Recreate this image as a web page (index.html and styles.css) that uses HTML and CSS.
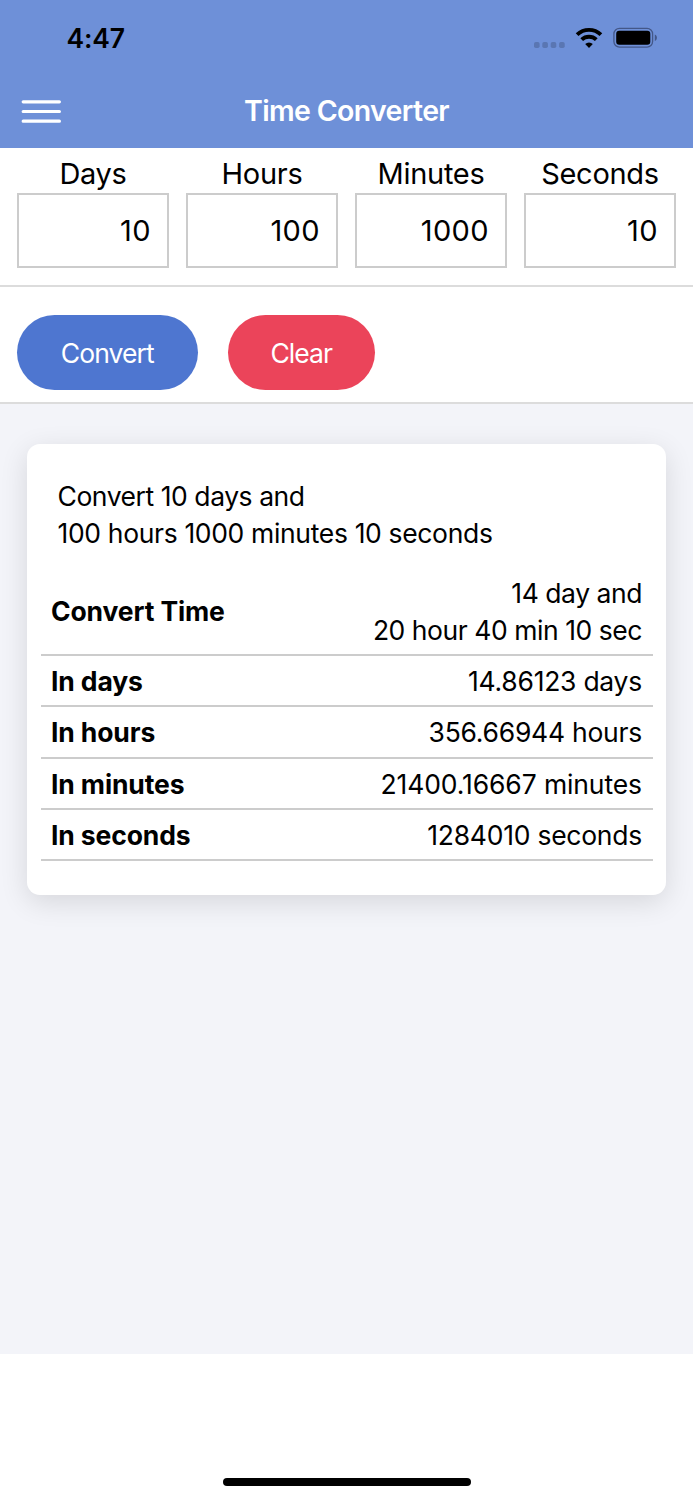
FILE: index.html
```html
<!DOCTYPE html>
<html lang="en">
<head>
<meta charset="utf-8">
<title>Time Converter</title>
<link rel="stylesheet" href="styles.css">
</head>
<body>
<div class="app">
  <header class="header">
    <div class="status">
      <span class="clock">4:47</span>
      <svg class="status-icons" width="126" height="24" viewBox="0 0 126 24">
        <g fill="#5a76b2">
          <rect x="3" y="15" width="5.6" height="6" rx="1.8"/>
          <rect x="11.3" y="15" width="5.6" height="6" rx="1.8"/>
          <rect x="19.7" y="15" width="5.6" height="6" rx="1.8"/>
          <rect x="28.1" y="15" width="5.6" height="6" rx="1.8"/>
        </g>
        <g fill="none" stroke="#000" stroke-width="3.9">
          <path d="M46.1 7.7a17.2 17.2 0 0 1 23.8 0"/>
          <path d="M50.7 12.6a10.6 10.6 0 0 1 14.6 0"/>
        </g>
        <path d="M58 20.9l-3.8-3.9a5.4 5.4 0 0 1 7.6 0z"/>
        <rect x="82.9" y="1.4" width="38.7" height="18.8" rx="5.6" fill="none" stroke="#435788" stroke-width="1.3"/>
        <rect x="85.2" y="3.8" width="34.1" height="14" rx="3"/>
        <path d="M123.8 7.4c2.8 1 2.8 5.6 0 6.6z" fill="#435788"/>
      </svg>
    </div>
    <nav class="nav">
      <svg class="menu" width="40" height="24" viewBox="0 0 40 24" stroke="#fff" stroke-width="3.2" stroke-linecap="round">
        <path d="M2.2 2.8h36.2M2.2 12.5h36.2M2.2 22.2h36.2"/>
      </svg>
      <h1 class="title">Time Converter</h1>
    </nav>
  </header>
  <section class="fields">
    <label class="field"><span class="label">Days</span><span class="input">10</span></label>
    <label class="field"><span class="label">Hours</span><span class="input">100</span></label>
    <label class="field"><span class="label">Minutes</span><span class="input">1000</span></label>
    <label class="field"><span class="label">Seconds</span><span class="input">10</span></label>
  </section>
  <section class="actions">
    <button class="btn convert">Convert</button>
    <button class="btn clear">Clear</button>
  </section>
  <main class="content">
    <article class="card">
      <p class="summary"><span class="tight">Convert 10 days and</span><br>100 hours 1000 minutes 10 seconds</p>
      <div class="row first"><b>Convert Time</b><span class="tight">14 day and<br>20 hour 40 min 10 sec</span></div>
      <div class="row"><b>In days</b><span>14.86123 days</span></div>
      <div class="row"><b>In hours</b><span>356.66944 hours</span></div>
      <div class="row"><b>In minutes</b><span class="loose">21400.16667 minutes</span></div>
      <div class="row"><b>In seconds</b><span>1284010 seconds</span></div>
    </article>
  </main>
  <footer class="footer"><div class="home"></div></footer>
</div>
</body>
</html>
```

FILE: styles.css
```css
* { box-sizing: border-box; }
body { margin: 0; background: #fff; color: #000; font-family: Inter, "Liberation Sans", sans-serif; }
.app { width: 693px; height: 1500px; display: flex; flex-direction: column; overflow: hidden; }
.header { height: 147.5px; background: #6e90d8; flex: none; }
.status { height: 75px; display: flex; justify-content: space-between; padding: 27px 36px 0 66.5px; }
.clock { font-size: 26.5px; line-height: 22px; font-weight: 600; letter-spacing: -0.2px; }
.status-icons { display: block; }
.nav { height: 72px; display: grid; grid-template-columns: 40px 1fr 40px; align-items: center; padding: 0 21px; }
.title { margin: 0; color: #fff; font-size: 28.5px; line-height: 36px; font-weight: 600; text-align: center; letter-spacing: -0.65px; }
.fields { height: 139px; flex: none; display: grid; grid-template-columns: repeat(4, 152px); column-gap: 17px; padding: 8.5px 17px 0; border-bottom: 2px solid #dcdcdc; }
.field { display: block; }
.label { display: block; height: 37px; line-height: 35px; font-size: 29px; text-align: center; letter-spacing: -0.3px; }
.input { display: block; height: 75px; border: 2px solid #ccc; padding-right: 16px; font-size: 29px; line-height: 71px; text-align: right; letter-spacing: 0.4px; }
.actions { height: 117px; flex: none; display: flex; gap: 30px; padding: 28.5px 17px 0; border-bottom: 2px solid #dcdcdc; }
.btn { height: 74.5px; border: 0; border-radius: 38px; padding: 1px 0 0; color: #fff; font: 400 26.5px Inter, "Liberation Sans", sans-serif; letter-spacing: -0.95px; }
.convert { width: 180.5px; background: #4e76d0; }
.clear { width: 147.5px; background: #eb445a; }
.content { height: 950.5px; flex: none; background: #f3f4f9; padding: 40.5px 27px 0; }
.card { height: 450.5px; background: #fff; border-radius: 13px; padding: 34px 13.5px 0; box-shadow: 0 7px 28px rgba(0, 0, 0, .12); font-size: 26.5px; line-height: 37px; }
.summary { margin: 0 17px 22px; letter-spacing: -0.34px; }
.row { height: 51.3px; display: flex; justify-content: space-between; align-items: center; padding: 2px 10.5px 0; border-bottom: 2px solid #ccc; text-align: right; letter-spacing: -0.25px; }
.row.first { height: 82px; padding-top: 0; padding-bottom: 5px; }
.row b { font-weight: 700; letter-spacing: -0.12px; }
.card .tight { letter-spacing: -0.45px; }
.card .loose { letter-spacing: -0.1px; }
.footer { height: 146px; flex: none; display: flex; justify-content: center; align-items: flex-end; padding-bottom: 14px; }
.home { width: 248px; height: 8px; border-radius: 4px; background: #000; }
```
